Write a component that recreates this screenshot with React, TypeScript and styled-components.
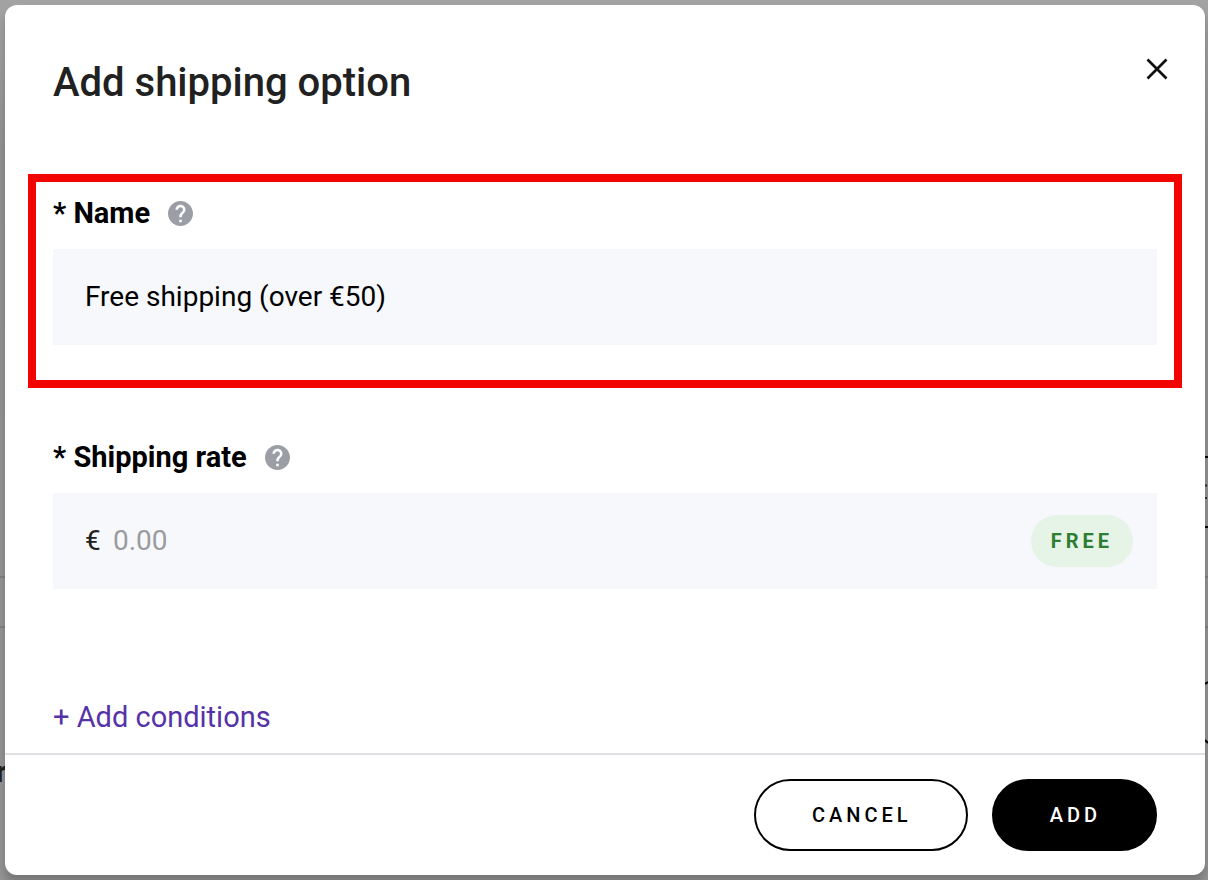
import React, { useState } from "react";
import styled, { createGlobalStyle, css } from "styled-components";

const GlobalStyle = createGlobalStyle`
  *, *::before, *::after { box-sizing: border-box; }
  body {
    margin: 0;
    font-family: Roboto, "Liberation Sans", sans-serif;
    color: #000;
    background: #909090;
  }
  button, input { font-family: inherit; }
`;

const Page = styled.div`
  position: relative;
  min-height: 100vh;
  padding: 5px 3px 5px 5px;
  overflow: hidden;
  background: linear-gradient(#a3a3a3 0, #9e9e9e 50px, #929292 150px, #949494 100%);
`;

const Underlay = styled.div`
  position: absolute;
  inset: 0;
`;

const Rule = styled.div<{ $top: number; $strong?: boolean }>`
  position: absolute;
  top: ${(p) => p.$top}px;
  left: ${(p) => (p.$strong ? "50%" : "0")};
  right: 0;
  height: 2px;
  background: ${(p) => (p.$strong ? "#000" : "#808080")};
`;

const CoveredText = styled.span`
  position: absolute;
  top: 756px;
  left: -4px;
  font-size: 29px;
  line-height: 32px;
  font-weight: 700;
  color: #222;
`;

const EdgeDrawing = styled.svg`
  position: absolute;
  top: 480px;
  right: 0;
`;

const Dialog = styled.section`
  position: relative;
  display: flex;
  flex-direction: column;
  background: #fff;
  border-radius: 12px;
  box-shadow: 0 8px 8px rgba(0, 0, 0, 0.2);
`;

const Header = styled.header`
  display: flex;
  align-items: flex-start;
  justify-content: space-between;
  padding: 40px 24px 67px 48px;
`;

const Title = styled.h1`
  margin: 0;
  padding-top: 14px;
  font-size: 40px;
  line-height: 48px;
  font-weight: 500;
  color: #212121;
`;

const CloseButton = styled.button`
  display: flex;
  align-items: center;
  justify-content: center;
  width: 48px;
  height: 48px;
  padding: 0;
  border: 0;
  background: none;
  color: #111;
`;

const Body = styled.div`
  display: flex;
  flex-direction: column;
  padding: 0 48px 16px;
`;

const Highlight = styled.div`
  margin: 0 -25px 49px;
  padding: 11px 17px 35px;
  border: 8px solid #f20500;
`;

const Field = styled.div`
  display: flex;
  flex-direction: column;
  gap: 16px;
`;

const LabelRow = styled.div`
  display: flex;
  align-items: center;
  gap: 18px;
`;

const Label = styled.label`
  font-size: 29px;
  line-height: 40px;
  font-weight: 700;
`;

const HelpButton = styled.button`
  display: flex;
  padding: 0;
  border: 0;
  background: none;
  color: #9b9fa5;
`;

const InputBox = styled.div`
  display: flex;
  align-items: center;
  height: 96px;
  padding: 0 24px 0 32px;
  background: #f6f8fc;
`;

const Currency = styled.span`
  flex: none;
  width: 28px;
  font-size: 28px;
  line-height: 40px;
  color: #212121;
`;

const TextInput = styled.input`
  flex: 1;
  min-width: 0;
  height: 40px;
  padding: 0;
  border: 0;
  outline: 0;
  background: none;
  font-size: 28px;
  line-height: 40px;
  color: #000;
  &::placeholder {
    color: #9b9b9e;
    opacity: 1;
  }
`;

const FreeButton = styled.button`
  flex: none;
  height: 52px;
  padding: 0 20px;
  border: 0;
  border-radius: 26px;
  background: #e6f4e7;
  color: #2e7d32;
  font-size: 20px;
  font-weight: 700;
  letter-spacing: 4px;
`;

const AddConditions = styled.button`
  align-self: flex-start;
  margin-top: 108px;
  padding: 0;
  border: 0;
  background: none;
  font-size: 29px;
  line-height: 40px;
  color: #5632a8;
`;

const Footer = styled.footer`
  display: flex;
  justify-content: flex-end;
  gap: 24px;
  padding: 24px 48px;
  border-top: 2px solid #dfe0e4;
`;

const Action = styled.button<{ $primary?: boolean }>`
  height: 72px;
  padding: 0 54px 0 56px;
  border: 2px solid #000;
  border-radius: 36px;
  background: #fff;
  color: #000;
  font-size: 20px;
  font-weight: 500;
  letter-spacing: 4px;
  ${(p) =>
    p.$primary &&
    css`
      background: #000;
      color: #fff;
    `}
`;

function HelpIcon() {
  return (
    <svg width="25" height="25" viewBox="2 2 20 20" fill="currentColor" aria-hidden="true">
      <path d="M12 2C6.48 2 2 6.48 2 12s4.48 10 10 10 10-4.480 10-10S17.520 2 12 2zm1 17h-2v-2h2v2zm2.070-7.750l-.9.920C13.450 12.900 13 13.500 13 15h-2v-.5c0-1.100.45-2.100 1.170-2.830l1.240-1.260c.37-.36.59-.86.59-1.410 0-1.100-.9-2-2-2s-2 .9-2 2H8c0-2.210 1.790-4 4-4s4 1.790 4 4c0 .88-.36 1.680-.93 2.250z" />
    </svg>
  );
}

export default function App() {
  const [name, setName] = useState("Free shipping (over €50)");
  const [rate, setRate] = useState("");

  return (
    <>
      <GlobalStyle />
      <Page>
        <Underlay aria-hidden="true">
          <Rule $top={456} $strong />
          <Rule $top={526} $strong />
          <Rule $top={576} />
          <Rule $top={626} />
          <CoveredText>r</CoveredText>
          <EdgeDrawing width="3" height="270" viewBox="0 0 3 270">
            <path d="M0 5l2 1M0 18h2" stroke="#333" strokeWidth="2" />
            <path d="M0 204l3-2M0 260l3 3" stroke="#000" strokeWidth="2" />
          </EdgeDrawing>
        </Underlay>
        <Dialog role="dialog" aria-labelledby="dialog-title">
          <Header>
            <Title id="dialog-title">Add shipping option</Title>
            <CloseButton type="button" aria-label="Close">
              <svg width="22" height="22" viewBox="0 0 22 22" fill="none" aria-hidden="true">
                <path d="M1.500 1.500l19 19M20.500 1.500l-19 19" stroke="currentColor" strokeWidth="2.700" />
              </svg>
            </CloseButton>
          </Header>
          <Body>
            <Highlight>
              <Field>
                <LabelRow>
                  <Label htmlFor="name">* Name</Label>
                  <HelpButton type="button" aria-label="About the name">
                    <HelpIcon />
                  </HelpButton>
                </LabelRow>
                <InputBox>
                  <TextInput id="name" value={name} onChange={(e) => setName(e.target.value)} />
                </InputBox>
              </Field>
            </Highlight>
            <Field>
              <LabelRow>
                <Label htmlFor="rate">* Shipping rate</Label>
                <HelpButton type="button" aria-label="About the shipping rate">
                  <HelpIcon />
                </HelpButton>
              </LabelRow>
              <InputBox>
                <Currency>€</Currency>
                <TextInput
                  id="rate"
                  inputMode="decimal"
                  placeholder="0.00"
                  value={rate}
                  onChange={(e) => setRate(e.target.value)}
                />
                <FreeButton type="button">FREE</FreeButton>
              </InputBox>
            </Field>
            <AddConditions type="button">+ Add conditions</AddConditions>
          </Body>
          <Footer>
            <Action type="button">CANCEL</Action>
            <Action type="button" $primary>
              ADD
            </Action>
          </Footer>
        </Dialog>
      </Page>
    </>
  );
}
